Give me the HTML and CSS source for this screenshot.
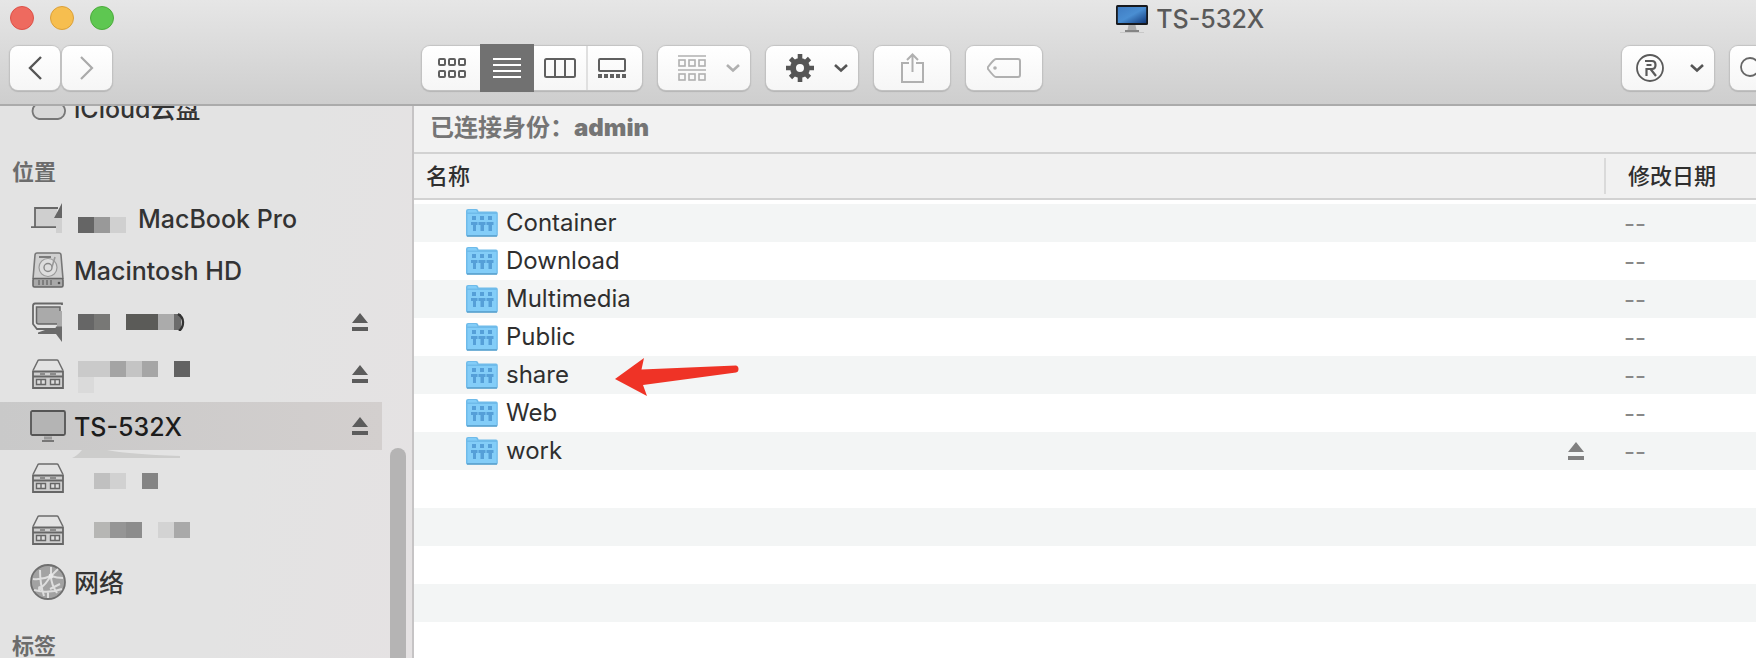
FILE: index.html
```html
<!DOCTYPE html>
<html lang="zh-CN">
<head>
    <meta charset="UTF-8">
    <meta name="viewport" content="width=device-width, initial-scale=1.0">
    <title>TS-532X</title>
    <link rel="stylesheet" href="styles.css">
</head>
<body>
    <!-- shared icons -->
    <svg class="sprite" aria-hidden="true">
        <symbol id="eject" viewBox="0 0 16 18">
            <path d="M8 0 L16 10 H0 Z M0 14 H16 V18 H0 Z" fill="currentColor"/>
        </symbol>
        <symbol id="chevron" viewBox="0 0 16 10">
            <path d="M2 2 L8 7.5 L14 2" fill="none" stroke="currentColor" stroke-width="2.6"/>
        </symbol>
        <symbol id="folder" viewBox="0 0 32 30">
            <path d="M0 27 V3 Q0 1 2 1 H10 Q11.500 1 12 2 L12.600 3.500 H30 Q31.800 3.500 31.800 5.500 V27 Q31.800 28.500 30 28.500 H1.500 Q0 28.500 0 27 Z" fill="#6fbbea"/>
            <path d="M1.500 3 Q1.500 2 3 2 H10 L11.500 4.500 H1.500 Z M1.500 27 V6 H30.500 V27 Z" fill="#83cdf8"/>
            <path d="M1 28 H31" stroke="#5a9fcb" stroke-width="1.400"/>
            <g fill="#559fd8">
                <rect x="6" y="8" width="4" height="4"/>
                <rect x="14" y="8" width="4" height="4"/>
                <rect x="22" y="8" width="4" height="4"/>
                <path d="M5 14 H11.500 V17 H10 V23 H7 V17 H5 Z M12.500 14 H19.500 V17 H18 V23 H14.500 V17 H12.500 Z M20.500 14 H27.500 V17 H26 V23 H22.500 V17 H20.500 Z"/>
            </g>
        </symbol>
        <symbol id="server" viewBox="0 0 32 30">
            <path d="M1 11.500 L6 1.500 Q6.300 1 7 1 H25 Q25.700 1 26 1.500 L31 11.500" fill="none" stroke="#6c6c6c" stroke-width="1.500"/>
            <path d="M1 12.500 H31 V29 H1 Z" fill="#cfcfcf" stroke="#666" stroke-width="1.800"/>
            <path d="M1 17.500 H31" stroke="#666" stroke-width="2"/>
            <path d="M8 15 H13 M18 15 H24" stroke="#777" stroke-width="1.600"/>
            <path d="M4.500 20.500 H13.500 V25.500 H4.500 Z M18.500 20.500 H27.500 V25.500 H18.500 Z M9 20.500 V25.500 M23 20.500 V25.500" fill="#ddd" stroke="#666" stroke-width="1.400"/>
        </symbol>
    </svg>

    <header class="toolbar">
        <div class="titlebar">
            <div class="lights">
                <button class="light close" aria-label="关闭"></button>
                <button class="light minimize" aria-label="最小化"></button>
                <button class="light zoom" aria-label="缩放"></button>
            </div>
            <h1 class="title">
                <svg width="32" height="28" viewBox="0 0 32 28">
                    <defs>
                        <linearGradient id="screen" x1="0" y1="0" x2="1" y2="1">
                            <stop offset="0" stop-color="#3f7cc2"/>
                            <stop offset=".5" stop-color="#4a8ed2"/>
                            <stop offset="1" stop-color="#123a7c"/>
                        </linearGradient>
                    </defs>
                    <rect width="32" height="20" rx="1.500" fill="#17191d"/>
                    <rect x="1.800" y="2" width="28.400" height="16" fill="url(#screen)"/>
                    <path d="M12.500 20 H19.500 L20.500 25 H11.500 Z" fill="#adadad"/>
                    <path d="M9 26 H23" stroke="#858585" stroke-width="2"/>
                    <path d="M4 27.500 H28" stroke="#c8c8c8"/>
                </svg>
                <span>TS-532X</span>
            </h1>
        </div>

        <div class="controls">
            <div class="nav">
                <button class="btn" aria-label="后退">
                    <svg width="16" height="26" viewBox="0 0 16 26"><path d="M14 2 L3 13 L14 24" fill="none" stroke="#555" stroke-width="2.400"/></svg>
                </button>
                <button class="btn" aria-label="前进">
                    <svg width="16" height="26" viewBox="0 0 16 26"><path d="M2 2 L13 13 L2 24" fill="none" stroke="#aaa" stroke-width="2.200"/></svg>
                </button>
            </div>
            <div class="views">
                <button class="view" aria-label="图标">
                    <svg width="28" height="20" viewBox="0 0 28 20" fill="none" stroke="#5f5f5f" stroke-width="2">
                        <rect x="1" y="1" width="6" height="6" rx="1"/><rect x="11" y="1" width="6" height="6" rx="1"/><rect x="21" y="1" width="6" height="6" rx="1"/>
                        <rect x="1" y="13" width="6" height="6" rx="1"/><rect x="11" y="13" width="6" height="6" rx="1"/><rect x="21" y="13" width="6" height="6" rx="1"/>
                    </svg>
                </button>
                <button class="view active" aria-label="列表">
                    <svg width="28" height="20" viewBox="0 0 28 20"><path d="M0 1 H28 M0 7 H28 M0 13 H28 M0 19 H28" stroke="#fff" stroke-width="2"/></svg>
                </button>
                <button class="view" aria-label="分栏">
                    <svg width="32" height="20" viewBox="0 0 32 20" fill="none" stroke="#5f5f5f" stroke-width="2"><rect x="1" y="1" width="30" height="18" rx="1.500"/><path d="M11 1 V19 M21 1 V19"/></svg>
                </button>
                <button class="view" aria-label="画廊">
                    <svg width="28" height="20" viewBox="0 0 28 20" fill="none" stroke="#5f5f5f" stroke-width="2"><rect x="1" y="1" width="26" height="12" rx="1"/><path d="M0 18 H28" stroke-width="4" stroke-dasharray="4 2"/></svg>
                </button>
            </div>
            <button class="btn menu dim" aria-label="分组">
                <svg width="28" height="26" viewBox="0 0 28 26" fill="none" stroke="currentColor" stroke-width="1.600">
                    <path d="M0 1 H28 M0 15 H28"/>
                    <rect x="1" y="5" width="6" height="6"/><rect x="11" y="5" width="6" height="6"/><rect x="21" y="5" width="6" height="6"/>
                    <rect x="1" y="19" width="6" height="6"/><rect x="11" y="19" width="6" height="6"/><rect x="21" y="19" width="6" height="6"/>
                </svg>
                <svg width="16" height="10"><use href="#chevron"/></svg>
            </button>
            <button class="btn menu" aria-label="操作">
                <svg width="28" height="28" viewBox="0 0 28 28" fill="none" stroke="currentColor">
                    <circle cx="14" cy="14" r="7" stroke-width="6"/>
                    <path d="M14 0 V6 M14 22 V28 M0 14 H6 M22 14 H28 M4.500 4.500 L8 8 M20 20 L23.500 23.500 M23.500 4.500 L20 8 M8 20 L4.500 23.500" stroke-width="4.600"/>
                </svg>
                <svg width="16" height="10"><use href="#chevron"/></svg>
            </button>
            <button class="btn wide" aria-label="共享">
                <svg width="24" height="30" viewBox="0 0 24 30" fill="none" stroke="#b0b0b0" stroke-width="2"><path d="M9 10 H2 V29 H23 V10 H16 M12.500 19 V2 M7 7 L12.500 1.500 L18 7"/></svg>
            </button>
            <button class="btn wide" aria-label="标签">
                <svg width="34" height="20" viewBox="0 0 34 20" fill="none" stroke="#b0b0b0" stroke-width="2"><path d="M9 1 H31 Q33 1 33 3 V17 Q33 19 31 19 H9 Q7 19 1 11 Q.6 10 1 9 Q7 1 9 1 Z"/><circle cx="8" cy="10" r="1.800" fill="#b0b0b0" stroke="none"/></svg>
            </button>
            <div class="tools">
                <button class="btn menu registered" aria-label="注册">
                    <svg width="28" height="28" viewBox="0 0 28 28" fill="none" stroke="#5a5a5a" stroke-width="1.800">
                        <circle cx="14" cy="14" r="13"/>
                        <path d="M9 7 H16 Q19.500 7 19.500 11 Q19.500 15 16 15 H14.500 L20 22 M10.500 22 V15 H14 M10.500 11 H15.500" stroke-width="2.200"/>
                    </svg>
                    <svg width="16" height="10"><use href="#chevron"/></svg>
                </button>
                <button class="btn search" aria-label="搜索">
                    <svg width="28" height="28" viewBox="0 0 28 28" fill="none" stroke="#666" stroke-width="1.800"><circle cx="10" cy="13" r="9"/><path d="M17 20 L24 27"/></svg>
                </button>
            </div>
        </div>
    </header>

    <div class="content">
        <nav class="sidebar">
            <ul class="places">
                <li class="place first">
                    <svg class="icon" width="36" height="24" viewBox="0 0 36 24"><path d="M9 23 A8 8 0 0 1 7 8 A10 10 0 0 1 26 7 A8 8 0 0 1 28 23 Z" fill="#d8d8d8" stroke="#777" stroke-width="1.800"/></svg>
                    <a href="#">iCloud云盘</a>
                </li>
            </ul>
            <h2 class="heading">位置</h2>
            <ul class="places">
                <li class="place">
                    <svg class="icon" width="36" height="32" viewBox="0 0 36 32">
                        <path d="M5 6 H27 V25 H5 Z" fill="#cfcfcf"/>
                        <path d="M5 25 V6 H28 M1 25.200 H27" fill="none" stroke="#686868" stroke-width="1.800"/>
                        <path d="M32 1 V16 H24 Q28 9 32 1 Z" fill="#666"/>
                        <path d="M26 16 H32 V31 H26 Z" fill="#d0d0d0"/>
                    </svg>
                    <svg class="mosaic low" width="48" height="16" viewBox="0 0 3 1" shape-rendering="crispEdges"><path d="M0 0H1V1H0Z" fill="#656565"/><path d="M1 0H2V1H1Z" fill="#999"/><path d="M2 0H3V1H2Z" fill="#d0d0d0"/></svg>
                    <a class="after-mosaic" href="#">MacBook Pro</a>
                </li>
                <li class="place">
                    <svg class="icon" width="36" height="36" viewBox="0 0 36 36">
                        <path d="M3 27 L5 3 Q5.200 1 7 1 H29 Q30.800 1 31 3 L33 27" fill="#d0d0d0" stroke="#777" stroke-width="1.600"/>
                        <rect x="3" y="26.500" width="30" height="8.500" rx="1.500" fill="#a9a9a9" stroke="#666" stroke-width="1.600"/>
                        <circle cx="18" cy="15.500" r="9" fill="#ddd" stroke="#999" stroke-width="1.200"/>
                        <circle cx="18" cy="15.500" r="4" fill="none" stroke="#888" stroke-width="1.400"/>
                        <path d="M9 5 H21" stroke="#666" stroke-width="1.600"/>
                        <path d="M25 5 L22 15" stroke="#999" stroke-width="1.600"/>
                        <path d="M9 28 V33 M13 28 V33 M17 28 V33 M21 28 V33" stroke="#6c6c6c" stroke-width="1.400"/>
                        <circle cx="29" cy="31" r="1.300" fill="#555"/>
                    </svg>
                    <a href="#">Macintosh HD</a>
                </li>
                <li class="place">
                    <svg class="icon" width="36" height="40" viewBox="0 0 36 40">
                        <path d="M32 3 V1.500 H5 Q3 1.500 3 4 V22 L7 27 H26" fill="none" stroke="#686868" stroke-width="1.800"/>
                        <path d="M6.500 5 H30 V22 H8.500 Q6.500 22 6.500 20 Z" fill="#aaa" stroke="#666" stroke-width="1.500"/>
                        <path d="M27 9 H32 V25 H27 Z" fill="#aaa"/>
                        <path d="M26 24.500 H32 V40 L26 32 H8 V30.500 L15 28 H25 Z" fill="#6b6b6b"/>
                    </svg>
                    <svg class="mosaic" width="108" height="18" viewBox="0 0 108 18">
                        <g shape-rendering="crispEdges"><path d="M0 1H16V17H0Z" fill="#666"/><path d="M16 1H32V17H16Z" fill="#787876"/><path d="M48 1H80V17H48Z" fill="#5b5b58"/><path d="M80 1H96V17H80Z" fill="#ababab"/><path d="M96 1H103V17H96Z" fill="#6b6b6b"/></g>
                        <path d="M100 1 Q105 4 105 9 Q105 15 101 18" fill="none" stroke="#333" stroke-width="2.400"/>
                    </svg>
                    <button class="eject" aria-label="推出"><svg width="16" height="18"><use href="#eject"/></svg></button>
                </li>
                <li class="place">
                    <svg class="icon" width="36" height="30"><use href="#server" x="2" width="32" height="30"/></svg>
                    <svg class="mosaic drop" width="112" height="32" viewBox="0 0 7 2" shape-rendering="crispEdges"><path d="M0 0H2V1H0Z" fill="#cacaca"/><path d="M2 0H3V1H2Z" fill="#a4a4a4"/><path d="M3 0H4V1H3Z" fill="#c4c4c4"/><path d="M4 0H5V1H4Z" fill="#a6a6a6"/><path d="M6 0H7V1H6Z" fill="#626262"/><path d="M0 1H1V2H0Z" fill="#dadada"/></svg>
                    <button class="eject" aria-label="推出"><svg width="16" height="18"><use href="#eject"/></svg></button>
                </li>
                <li class="place selected">
                    <svg class="icon" width="36" height="32" viewBox="0 0 36 32">
                        <rect x="1" y="1" width="34" height="24" rx="1.500" fill="#b4b4b4" stroke="#555" stroke-width="1.800"/>
                        <path d="M14 28 H22" stroke="#999" stroke-width="3"/>
                        <path d="M12 31 H24" stroke="#777" stroke-width="2"/>
                    </svg>
                    <a href="#">TS-532X</a>
                    <button class="eject" aria-label="推出"><svg width="16" height="18"><use href="#eject"/></svg></button>
                    <svg class="smudge" width="108" height="8" viewBox="0 0 108 8"><path d="M10 0 H35 Q55 4 108 6 V8 H0 Q5 6 10 0 Z" fill="#cdcdcc"/></svg>
                </li>
                <li class="place">
                    <svg class="icon" width="36" height="30"><use href="#server" x="2" width="32" height="30"/></svg>
                    <svg class="mosaic indent drop" width="64" height="16" viewBox="0 0 4 1" shape-rendering="crispEdges"><path d="M0 0H1V1H0Z" fill="#c0c0c0"/><path d="M1 0H2V1H1Z" fill="#d1d1d1"/><path d="M3 0H4V1H3Z" fill="#848484"/></svg>
                </li>
                <li class="place">
                    <svg class="icon" width="36" height="30"><use href="#server" x="2" width="32" height="30"/></svg>
                    <svg class="mosaic indent" width="96" height="16" viewBox="0 0 6 1" shape-rendering="crispEdges"><path d="M0 0H1V1H0Z" fill="#b6b6b4"/><path d="M1 0H2V1H1Z" fill="#959595"/><path d="M2 0H3V1H2Z" fill="#8c8c8c"/><path d="M4 0H5V1H4Z" fill="#d3d3d3"/><path d="M5 0H6V1H5Z" fill="#a9a9a9"/></svg>
                </li>
                <li class="place">
                    <svg class="icon" width="36" height="36" viewBox="0 0 36 36" fill="none">
                        <circle cx="18" cy="18" r="17" fill="#a2a2a2" stroke="#6f6f6f" stroke-width="1.800"/>
                        <path d="M3 15 Q12 16 21 12 L28 5 M21 12 Q27 14 33 14 M21 12 Q21 20 27 29 M21 12 Q16 20 8 27 M10 6 Q10 20 14 32 M4 26 Q18 30 32 25 M18 27 V34 M21 3 V12 M20 25 L30 20" stroke="#dedede" stroke-width="2"/>
                        <circle cx="21" cy="12" r="2.400" fill="#e8e8e8"/><circle cx="10" cy="24" r="2" fill="#ddd"/>
                    </svg>
                    <a href="#">网络</a>
                </li>
            </ul>
            <h2 class="heading">标签</h2>
            <div class="scrollbar"></div>
        </nav>

        <main class="main">
            <p class="identity">已连接身份：<b>admin</b></p>
            <table class="files">
                <thead>
                    <tr><th>名称</th><th class="date"><span>修改日期</span></th></tr>
                </thead>
                <tbody>
                    <tr><td><div class="name"><svg width="32" height="30"><use href="#folder"/></svg>Container</div></td><td class="date">--</td></tr>
                    <tr><td><div class="name"><svg width="32" height="30"><use href="#folder"/></svg>Download</div></td><td class="date">--</td></tr>
                    <tr><td><div class="name"><svg width="32" height="30"><use href="#folder"/></svg>Multimedia</div></td><td class="date">--</td></tr>
                    <tr><td><div class="name"><svg width="32" height="30"><use href="#folder"/></svg>Public</div></td><td class="date">--</td></tr>
                    <tr>
                        <td>
                            <div class="name">
                                <svg width="32" height="30"><use href="#folder"/></svg>share
                                <svg class="arrow" width="124" height="38" viewBox="0 0 124 38"><path d="M0 21 L29 0 L26.500 11.500 L121 7.500 Q123.500 8 123.500 11 Q123.500 14 121 14.500 L28 27 L32 38 Z" fill="#ef3326"/></svg>
                            </div>
                        </td>
                        <td class="date">--</td>
                    </tr>
                    <tr><td><div class="name"><svg width="32" height="30"><use href="#folder"/></svg>Web</div></td><td class="date">--</td></tr>
                    <tr>
                        <td>
                            <div class="name">
                                <svg width="32" height="30"><use href="#folder"/></svg>work
                                <button class="eject" aria-label="推出"><svg width="16" height="18"><use href="#eject"/></svg></button>
                            </div>
                        </td>
                        <td class="date">--</td>
                    </tr>
                    <tr><td></td><td></td></tr>
                    <tr><td></td><td></td></tr>
                    <tr><td></td><td></td></tr>
                    <tr><td></td><td></td></tr>
                </tbody>
            </table>
        </main>
    </div>
</body>
</html>
```
FILE: styles.css
```css
* {
    box-sizing: border-box;
}

body {
    display: flex;
    flex-direction: column;
    height: 100vh;
    margin: 0;
    overflow: hidden;
    background-color: #fff;
    color: #2f2f2f;
    font-family: Inter, "Noto Sans CJK SC", sans-serif;
    font-size: 24px;
}

button {
    padding: 0;
    border: none;
    background: none;
    color: inherit;
    font: inherit;
}

svg {
    display: block;
    flex-shrink: 0;
}

.sprite {
    position: absolute;
    width: 0;
    height: 0;
}

/* Toolbar */
.toolbar {
    flex-shrink: 0;
    height: 106px;
    overflow: hidden;
    background: linear-gradient(#e6e6e6, #cecece);
    border-bottom: 2px solid #ababab;
}

.titlebar {
    display: flex;
    align-items: center;
    height: 38px;
    padding: 0 28% 2px 10px;
}

.lights {
    display: flex;
    gap: 16px;
}

.light {
    width: 24px;
    height: 24px;
    border: 1px solid #dd5148;
    border-radius: 50%;
    background-color: #ee6a5f;
}

.minimize {
    border-color: #dba03a;
    background-color: #f6be4f;
}

.zoom {
    border-color: #4cab3c;
    background-color: #5ec751;
}

.title {
    display: flex;
    align-items: center;
    gap: 8px;
    margin: 0 0 0 auto;
    padding-top: 2px;
    color: #5a5a5a;
    font-size: 25px;
    font-weight: 500;
    line-height: 32px;
}

.controls {
    display: flex;
    gap: 16px;
    padding: 8px 0 0 10px;
}

.btn {
    display: flex;
    align-items: center;
    justify-content: center;
    width: 50px;
    height: 44px;
    border-radius: 8px;
    background: linear-gradient(#fff, #f6f6f6);
    box-shadow: 0 0 1px 1px #c4c4c4, 0 1px 1px 1px #b4b4b4;
}

.nav {
    display: flex;
    gap: 2px;
    margin-right: 294px;
}

.views {
    display: flex;
    height: 44px;
    border-radius: 8px;
    background: linear-gradient(#fff, #f6f6f6);
    box-shadow: 0 0 1px 1px #c4c4c4, 0 1px 1px 1px #b4b4b4;
}

.view {
    display: flex;
    align-items: center;
    justify-content: center;
    width: 52px;
}

.view:first-child {
    width: 58px;
    padding-left: 2px;
}

.view:last-child {
    width: 56px;
    padding-right: 6px;
    border-left: 2px solid #e0e0e0;
}

.view.active {
    width: 54px;
    height: 48px;
    margin-top: -2px;
    background-color: #717171;
}

.menu {
    justify-content: space-between;
    width: 92px;
    padding: 0 9px 0 20px;
    color: #555;
}

.dim {
    color: #b0b0b0;
}

.registered {
    padding-left: 14px;
}

.wide {
    width: 76px;
}

.tools {
    display: flex;
    gap: 16px;
    margin-left: auto;
    margin-right: -34px;
}

.search {
    justify-content: flex-start;
    width: 60px;
    padding-left: 10px;
}

/* Sidebar */
.content {
    display: flex;
    flex: 1;
    min-height: 0;
}

.sidebar {
    position: relative;
    flex-shrink: 0;
    width: 414px;
    overflow: hidden;
    background: linear-gradient(100deg, #e3e3e3 60%, #e5e2e3);
    border-right: 2px solid #c6c4c5;
}

.places {
    margin: 0;
    padding: 0;
    list-style: none;
}

.place {
    position: relative;
    display: flex;
    align-items: center;
    width: 382px;
    height: 48px;
    margin-bottom: 4px;
    padding: 0 14px 0 30px;
    font-size: 25px;
    font-weight: 500;
    line-height: 36px;
}

/* scrolled partly under the toolbar */
.first {
    margin-top: -22px;
}

.place a {
    margin-left: 8px;
    padding-top: 2px;
    color: #333;
    text-decoration: none;
}

.selected {
    background: linear-gradient(90deg, #c9c9c9, #d3cfce);
}

.selected a {
    color: #1c1c1c;
}

.place .after-mosaic {
    margin-left: 12px;
}

.mosaic {
    margin-left: 12px;
}

.low {
    margin-top: 14px;
}

.drop {
    margin-top: 6px;
}

.indent {
    margin-left: 28px;
}

.eject {
    margin-left: auto;
    color: #5c5c5c;
}

.smudge {
    position: absolute;
    top: 100%;
    left: 72px;
}

.heading {
    height: 58px;
    margin: 0;
    padding: 20px 12px 0;
    color: #6c6c6c;
    font-size: 22px;
    font-weight: 700;
    line-height: 32px;
}

.scrollbar {
    position: absolute;
    top: 342px;
    right: 6px;
    bottom: -20px;
    width: 16px;
    border-radius: 8px;
    background-color: #b5b4b4;
}

/* File list */
.main {
    flex: 1;
    min-width: 0;
}

.identity {
    height: 48px;
    margin: 0;
    padding: 0 16px;
    background-color: #f2f2f2;
    border-bottom: 2px solid #d2d2d2;
    color: #757575;
    font-weight: 700;
    line-height: 44px;
}

.files {
    width: 100%;
    border-spacing: 0;
    table-layout: fixed;
}

.files th {
    height: 46px;
    padding: 0 12px;
    background-color: #f1f1f1;
    border-bottom: 2px solid #d2d2d2;
    font-size: 22px;
    font-weight: 500;
    line-height: 36px;
    text-align: left;
}

.files .date {
    width: 152px;
}

.files th.date {
    padding: 0;
}

.files th span {
    display: block;
    padding-left: 22px;
    border-left: 2px solid #dadada;
}

.files tbody::before {
    content: "";
    display: block;
    height: 4px;
}

.files td {
    height: 38px;
    padding: 0;
}

.files tbody tr:nth-child(odd) {
    background-color: #f3f5f5;
}

.files td.date {
    padding-left: 20px;
    color: #888;
}

.name {
    position: relative;
    display: flex;
    align-items: center;
    gap: 8px;
    height: 38px;
    padding: 0 20px 0 52px;
    line-height: 38px;
}

.name .eject {
    color: #808080;
}

.arrow {
    position: absolute;
    top: 2px;
    left: 201px;
}
```
